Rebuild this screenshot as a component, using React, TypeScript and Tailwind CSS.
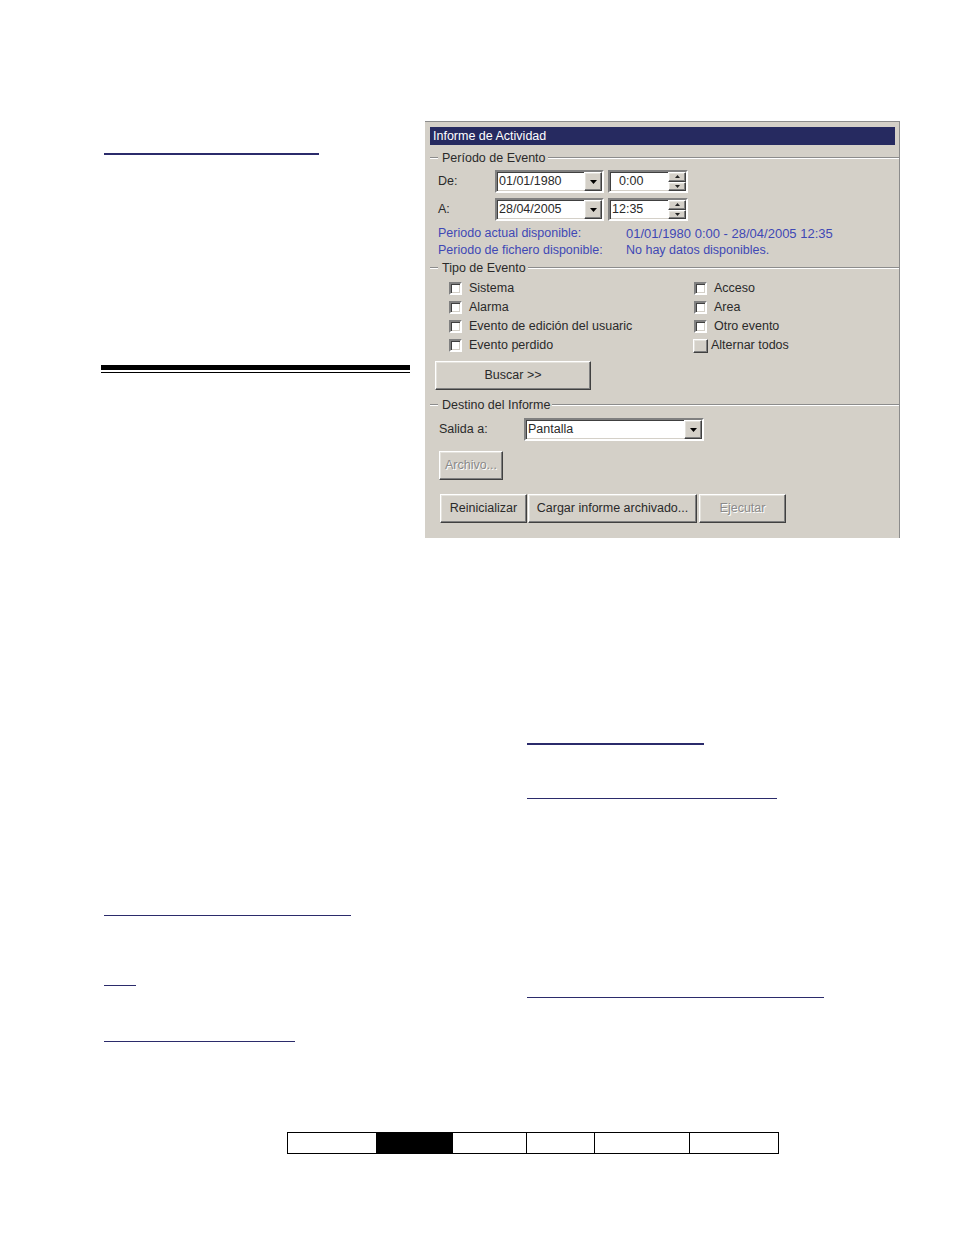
import React from "react";

const sunken =
  "border-2 border-t-[#808080] border-l-[#808080] border-b-white border-r-white shadow-[inset_1px_1px_0_#404040,inset_-1px_-1px_0_#d4d0c8]";
const raised =
  "border border-t-white border-l-white border-b-[#404040] border-r-[#404040] shadow-[inset_-1px_-1px_0_#808080,inset_1px_1px_0_#e4e2dc] bg-[#d4d0c8]";
const disabledText = "text-[#8a8a8a] [text-shadow:1px_1px_0_#ffffff]";

function Etch({ className = "" }: { className?: string }) {
  return <div className={"h-0 border-t border-b border-t-[#8c8c8c] border-b-white " + className} />;
}

function GroupHeader({ label }: { label: string }) {
  return (
    <div className="flex h-[14px] items-center pl-[5px]">
      <Etch className="w-[8px]" />
      <span className="pl-[4px] pr-[2px] leading-none">{label}</span>
      <Etch className="flex-1" />
    </div>
  );
}

function Arrow() {
  return (
    <svg width="7" height="4" viewBox="0 0 7 4">
      <polygon points="0,0 7,0 3.5,4" fill="#000" />
    </svg>
  );
}

function DropBtn() {
  return (
    <span className={"grid h-[19px] w-[18px] place-items-center " + raised}>
      <Arrow />
    </span>
  );
}

function Combo({ value, width }: { value: string; width: string }) {
  return (
    <div className={"flex h-[23px] bg-white " + sunken + " " + width}>
      <span className="flex-1 pl-[2px] leading-[19px]">{value}</span>
      <DropBtn />
    </div>
  );
}

function TimeBox({ value, pad }: { value: string; pad: string }) {
  return (
    <div className={"flex h-[23px] w-[80px] bg-white " + sunken}>
      <span className={"flex-1 leading-[19px] " + pad}>{value}</span>
      <span className="flex w-[18px] flex-col bg-[#d4d0c8]">
        <span className={"grid flex-1 place-items-center " + raised}>
          <svg width="5" height="3" viewBox="0 0 5 3">
            <polygon points="2.5,0 5,3 0,3" fill="#222" />
          </svg>
        </span>
        <span className={"grid flex-1 place-items-center " + raised}>
          <svg width="5" height="3" viewBox="0 0 5 3">
            <polygon points="0,0 5,0 2.5,3" fill="#222" />
          </svg>
        </span>
      </span>
    </div>
  );
}

function Check({ label }: { label: string }) {
  return (
    <div className="flex h-[19px] items-center gap-[7px]">
      <span className={"h-[13px] w-[13px] bg-white " + sunken} />
      <span className="leading-none">{label}</span>
    </div>
  );
}

function Button({ label, width, disabled }: { label: string; width: string; disabled?: boolean }) {
  return (
    <div className={"grid h-[29px] place-items-center " + raised + " " + width}>
      <span className={disabled ? disabledText : ""}>{label}</span>
    </div>
  );
}

function Dialog() {
  return (
    <div className="w-[475px] border-t border-r border-t-[#8c8c8c] border-r-[#8c8c8c] bg-[#d4d0c8] pb-[15px] pt-[5px] text-[12.5px] text-[#2a2a2a]">
      <div className="mx-[5px] mr-[4px] flex h-[18px] items-center bg-[#262a60] pl-[3px] text-white">
        Informe de Actividad
      </div>

      <div className="mt-[6px]">
        <GroupHeader label="Período de Evento" />
      </div>
      <div className="mt-[5px] flex items-center pl-[13px]">
        <span className="w-[57px]">De:</span>
        <Combo value="01/01/1980" width="w-[109px]" />
        <span className="w-[4px]" />
        <TimeBox value="0:00" pad="pl-[9px]" />
      </div>
      <div className="mt-[5px] flex items-center pl-[13px]">
        <span className="w-[57px]">A:</span>
        <Combo value="28/04/2005" width="w-[109px]" />
        <span className="w-[4px]" />
        <TimeBox value="12:35" pad="pl-[2px]" />
      </div>
      <div className="mt-[4px] pl-[13px] text-[#3f48b5]">
        <div className="flex h-[17px] items-center">
          <span className="w-[188px]">Periodo actual disponible:</span>
          <span className="text-[13px]">01/01/1980 0:00 - 28/04/2005 12:35</span>
        </div>
        <div className="flex h-[17px] items-center">
          <span className="w-[188px]">Periodo de fichero disponible:</span>
          <span>No hay datos disponibles.</span>
        </div>
      </div>

      <div className="mt-[2px]">
        <GroupHeader label="Tipo de Evento" />
      </div>
      <div className="mt-[4px] grid grid-cols-[245px_1fr] pl-[24px]">
        <div>
          <Check label="Sistema" />
          <Check label="Alarma" />
          <Check label="Evento de edición del usuaric" />
          <Check label="Evento perdido" />
        </div>
        <div>
          <Check label="Acceso" />
          <Check label="Area" />
          <Check label="Otro evento" />
          <div className="-ml-[1px] flex h-[19px] items-center gap-[3px]">
            <span className={"h-[14px] w-[15px] " + raised} />
            <span className="leading-none">Alternar todos</span>
          </div>
        </div>
      </div>
      <div className="ml-[10px] mt-[6px]">
        <Button label="Buscar >>" width="w-[156px]" />
      </div>

      <div className="mt-[8px]">
        <GroupHeader label="Destino del Informe" />
      </div>
      <div className="mt-[6px] flex items-center pl-[14px]">
        <span className="w-[85px]">Salida a:</span>
        <Combo value="Pantalla" width="w-[180px]" />
      </div>
      <div className="ml-[14px] mt-[10px]">
        <Button label="Archivo..." width="w-[64px]" disabled />
      </div>
      <div className="ml-[15px] mt-[14px] flex">
        <Button label="Reinicializar" width="w-[87px]" />
        <div className="w-[1px]" />
        <Button label="Cargar informe archivado..." width="w-[169px]" />
        <div className="w-[2px]" />
        <Button label="Ejecutar" width="w-[87px]" disabled />
      </div>
    </div>
  );
}

const navy = "bg-[#2b2b6b]";

export default function App() {
  return (
    <div className="min-h-[1235px] w-[954px] bg-white pt-[121px] font-['Liberation_Sans',Arial,sans-serif]">
      <div className="flex">
        <div className="ml-[101px] w-[309px]">
          <div className={"ml-[3px] mt-[32px] h-[2px] w-[215px] " + navy} />
          <div className="mt-[210px] h-[5px] bg-black" />
          <div className="mt-[2px] h-px bg-black" />
        </div>
        <div className="ml-[15px]">
          <Dialog />
        </div>
      </div>

      <div className="flex">
        <div className="ml-[104px] w-[423px]">
          <div className={"mt-[377px] h-px w-[247px] " + navy} />
          <div className={"mt-[69px] h-px w-[32px] " + navy} />
          <div className={"mt-[55px] h-px w-[191px] " + navy} />
        </div>
        <div>
          <div className={"mt-[205px] h-[2px] w-[177px] " + navy} />
          <div className={"mt-[53px] h-px w-[250px] " + navy} />
          <div className={"mt-[198px] h-px w-[297px] " + navy} />
        </div>
      </div>

      <div className="ml-[287px] mt-[90px] flex h-[22px] w-[492px] border border-black">
        <div className="w-[89px] border-r border-black" />
        <div className="w-[76px] bg-black" />
        <div className="w-[74px] border-r border-black" />
        <div className="w-[68px] border-r border-black" />
        <div className="w-[95px] border-r border-black" />
        <div className="flex-1" />
      </div>
    </div>
  );
}
